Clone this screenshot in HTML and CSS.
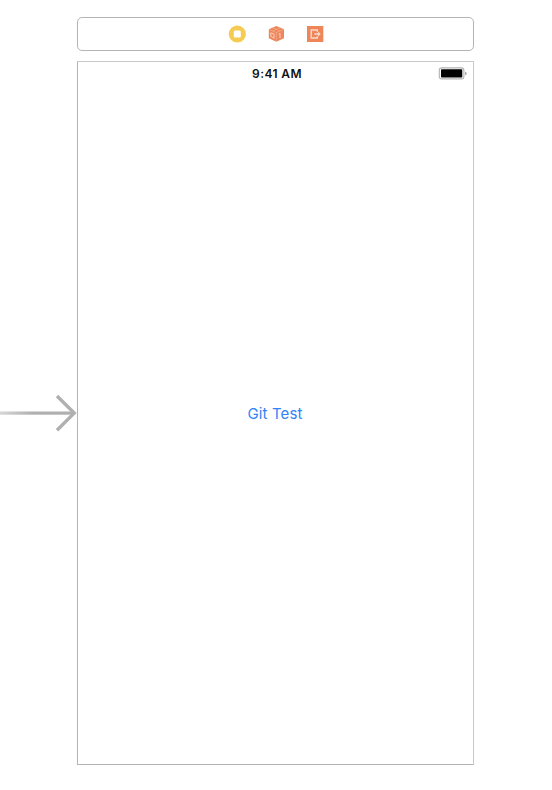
FILE: index.html
```html
<!DOCTYPE html>
<html lang="en">
<head>
<meta charset="utf-8">
<title>Storyboard</title>
<link rel="stylesheet" href="styles.css">
</head>
<body>
<main class="canvas">
  <svg class="entry" viewBox="0 0 77 44" aria-hidden="true">
    <defs>
      <linearGradient id="fade" x1="0" x2="1"><stop offset="0" stop-color="#d6d6d6"/><stop offset=".45" stop-color="#b0b0b0"/></linearGradient>
    </defs>
    <rect x="0" y="20.5" width="74" height="3.2" fill="url(#fade)"/>
    <path d="M57 5L74.2 22.1L57 39.2" fill="none" stroke="#b0b0b0" stroke-width="3.4"/>
  </svg>
  <section class="scene">
    <header class="dock">
      <svg class="icon" viewBox="0 0 18 18">
        <circle cx="9.3" cy="9" r="8.6" fill="#f5cb52"/>
        <rect x="5.8" y="5.6" width="7" height="7" rx="1.4" fill="#fff"/>
      </svg>
      <svg class="icon" viewBox="0 0 18 18">
        <path d="M9.4 1L17 4.2V13.2L9.4 16.8L1.8 13.2V4.2Z" fill="#ee865a"/>
        <path d="M2 4.5L9.4 7.6L16.8 4.5M9.4 7.6V16.5" fill="none" stroke="#f4ae90" stroke-width=".7"/>
        <path d="M5.4 2.8L13 6M13.2 2.8L5.7 6" fill="none" stroke="#f4ae90" stroke-width=".6"/>
        <path d="M3.6 7.7L7 9V13.6M3.8 8V11.4L6.4 12.8M13 8.3V13.2M11.7 9.3L13 8.3" fill="none" stroke="#fad0bf" stroke-width="1"/>
      </svg>
      <svg class="icon" viewBox="0 0 18 18">
        <rect x="1" y="1" width="16.3" height="16" fill="#ee865a"/>
        <path d="M11.3 6.8V5H5.2V13H11.3V11.2M8.4 9H13" fill="none" stroke="#fbd9cc" stroke-width="1.4"/>
        <path d="M12 6.6L14.8 9L12 11.4Z" fill="#fbd9cc"/>
      </svg>
    </header>
    <div class="screen">
      <div class="status">
        <span class="time">9:41 AM</span>
        <svg class="battery" viewBox="0 0 29 13">
          <rect x="1.3" y=".9" width="24.6" height="11" rx="2.5" fill="#fff" stroke="#b3b3b3" stroke-width="1.1"/>
          <rect x="3" y="2.3" width="21.3" height="8.2" rx=".8" fill="#000"/>
          <path d="M27.2 4.7Q28.6 5 28.6 6.5T27.2 8.3Z" fill="#999"/>
        </svg>
      </div>
      <div class="content"><span class="label">Git Test</span></div>
    </div>
  </section>
</main>
</body>
</html>
```
FILE: styles.css
```css
* { box-sizing: border-box; }
body { margin: 0; background: #fff; font-family: Inter, "Liberation Sans", sans-serif; }
.canvas { display: flex; width: 552px; height: 790px; padding-top: 17px; overflow: hidden; }
.entry { flex: none; width: 77px; height: 44px; margin-top: 374px; }
.scene { width: 397px; }
.dock { display: flex; justify-content: center; align-items: center; gap: 21px; height: 34px; border: 1px solid #b4b4b4; border-radius: 5px; }
.icon { width: 18px; height: 18px; }
.screen { display: flex; flex-direction: column; height: 704px; margin-top: 10px; border: 1px solid #b4b4b4; border-top-color: #c9c9c9; border-right-color: #c9c9c9; }
.status { display: grid; grid-template-columns: 1fr auto 1fr; align-items: center; height: 22px; padding: 0 6px; }
.time { grid-column: 2; padding: 1px 0 0 3px; font-size: 12px; font-weight: 600; line-height: 22px; letter-spacing: .4px; color: #111; white-space: nowrap; }
.battery { justify-self: end; width: 29px; height: 13px; }
.content { display: flex; flex: 1; align-items: center; justify-content: center; padding-bottom: 20px; }
.label { font-size: 15px; line-height: 20px; letter-spacing: .15px; margin-right: 1px; color: #2f83f7; white-space: nowrap; }
```
